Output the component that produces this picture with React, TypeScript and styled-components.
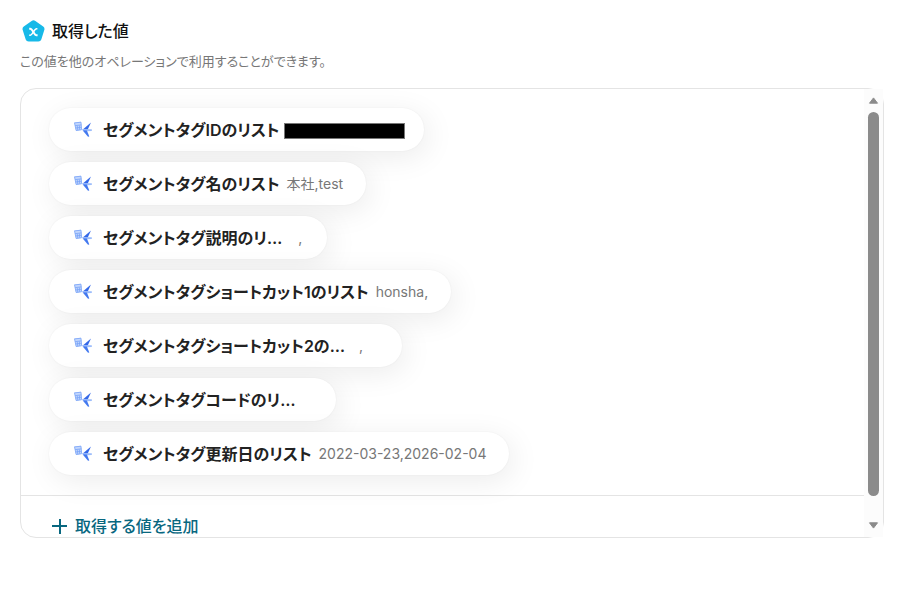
import React from "react";
import styled, { createGlobalStyle } from "styled-components";

const GlobalStyle = createGlobalStyle`
  * { box-sizing: border-box; }
  body {
    margin: 0;
    background: #fff;
    color: #222;
    font-family: Inter, "Noto Sans CJK JP", sans-serif;
    font-feature-settings: "palt";
  }
`;

const Page = styled.main`
  display: flex;
  flex-direction: column;
  height: 100vh;
  padding: 20px 21px 54px 20px;
`;

const Heading = styled.header`
  display: flex;
  align-items: center;
  gap: 7px;
  padding-left: 2px;
`;

const Title = styled.h1`
  margin: 0;
  color: #111;
  font-size: 16px;
  line-height: 22px;
  font-weight: 500;
`;

const Description = styled.p`
  margin: 9px 0 17px;
  color: #777;
  font-size: 13px;
  line-height: 20px;
`;

const Panel = styled.section`
  display: flex;
  flex: 1;
  min-height: 0;
  border: 1px solid #e4e4e4;
  border-radius: 16px;
`;

const Content = styled.div`
  flex: 1;
  min-width: 0;
  overflow: hidden;
  border-radius: 16px 0 0 16px;
`;

const List = styled.ul`
  display: flex;
  flex-direction: column;
  align-items: flex-start;
  gap: 11px;
  margin: 0;
  padding: 19px 28px 20px;
  list-style: none;
`;

const Pill = styled.li`
  display: flex;
  align-items: center;
  height: 43px;
  padding: 0 23px 0 25px;
  border-radius: 22px;
  background: #fff;
  box-shadow: 4px 6px 30px rgba(0, 0, 0, 0.08), 0 0 2px rgba(0, 0, 0, 0.06);
  white-space: nowrap;
`;

const Label = styled.span`
  margin-left: 11px;
  font-size: 16px;
  line-height: 24px;
  font-weight: 600;
`;

const Value = styled.span<{ $lead?: number; $width?: number }>`
  min-width: ${(p) => (p.$width ? `${p.$width}px` : "0")};
  margin-left: ${(p) => p.$lead ?? 7}px;
  color: #777;
  font-size: 14px;
  line-height: 20px;
`;

const Redaction = styled.span`
  width: 121px;
  height: 16px;
  margin: 2px -4px 0 4px;
  border: 1px solid #777;
  background: #000;
`;

const Footer = styled.footer`
  border-top: 1px solid #e4e4e4;
  padding: 18px 30px;
`;

const AddButton = styled.button`
  display: flex;
  align-items: center;
  gap: 6px;
  padding: 0;
  border: 0;
  background: none;
  color: #08677f;
  font: inherit;
  font-feature-settings: "palt";
  font-size: 16px;
  line-height: 24px;
  font-weight: 500;
  white-space: nowrap;
  cursor: pointer;
`;

const ScrollTrack = styled.div`
  display: flex;
  flex-direction: column;
  align-items: center;
  width: 19px;
  padding: 8px 0;
  background: #fcfcfc;
`;

const ScrollThumb = styled.div`
  flex: 1;
  width: 11px;
  margin: 8px 0 26px;
  border-radius: 6px;
  background: #8b8b8b;
`;

function AppIcon() {
  return (
    <svg width="23" height="22" viewBox="0 0 23 22" aria-hidden="true">
      <path
        d="M9.6.9a3.2 3.2 0 0 1 3.8 0l7.8 5.7a3 3 0 0 1 1.1 3.4l-3 9.4a3.1 3.1 0 0 1-2.9 2.1H6.6a3.1 3.1 0 0 1-2.9-2.1L.7 10a3 3 0 0 1 1.1-3.4Z"
        fill="#17b9e8"
      />
      <path
        d="M7.2 8.8h1c2.5 0 4 6.4 6.2 6.4h1.2"
        fill="none"
        stroke="#fff"
        strokeWidth="2"
      />
      <path
        d="M15.4 8.8h-.8c-2.5 0-4.1 6.4-6.4 6.4h-1"
        fill="none"
        stroke="#fff"
        strokeWidth="1.5"
      />
    </svg>
  );
}

function TagIcon() {
  return (
    <svg width="18" height="18" viewBox="0 0 18 18" aria-hidden="true">
      <path d="M.3 1.4 7 .8l.7 8.2-5.7 1Z" fill="#c3d7fd" />
      <path
        d="M.5 1.9 7 1.2M1.2 4.6l6.2-.7M3.2 4.6l.6 4.6M5.3 4.4l.4 4.4M1.7 7l5.8-.8M2.1 9.5 7.6 8.7M.5 1.8l1.6 7.6M7 1.2l.6 7.4"
        fill="none"
        stroke="#78a3f7"
        strokeWidth=".8"
      />
      <path d="M8.5 8.7 17 1.6 13.6 8.8l-3 .6Z" fill="#3468e8" />
      <path d="m7 8 10.8.3v1.6l-5.2.3Z" fill="#9dbdfb" />
      <path d="m8.5 9.2 4.4.3 2.4 6-1.3.2Z" fill="#4379ef" />
    </svg>
  );
}

type Item = {
  label: string;
  value?: string;
  redacted?: boolean;
  lead?: number;
  width?: number;
};

const items: Item[] = [
  { label: "セグメントタグIDのリスト", redacted: true },
  { label: "セグメントタグ名のリスト", value: "本社,test" },
  { label: "セグメントタグ説明のリ…", value: ",", lead: 16, width: 6 },
  { label: "セグメントタグショートカット1のリスト", value: "honsha," },
  { label: "セグメントタグショートカット2の…", value: ",", lead: 14, width: 20 },
  { label: "セグメントタグコードのリ…", value: "", width: 10 },
  { label: "セグメントタグ更新日のリスト", value: "2022-03-23,2026-02-04" },
];

export default function App() {
  return (
    <>
      <GlobalStyle />
      <Page>
        <Heading>
          <AppIcon />
          <Title>取得した値</Title>
        </Heading>
        <Description>この値を他のオペレーションで利用することができます。</Description>
        <Panel>
          <Content>
            <List>
              {items.map((item) => (
                <Pill key={item.label}>
                  <TagIcon />
                  <Label>{item.label}</Label>
                  {item.redacted ? (
                    <Redaction />
                  ) : (
                    <Value $lead={item.lead} $width={item.width}>
                      {item.value}
                    </Value>
                  )}
                </Pill>
              ))}
            </List>
            <Footer>
              <AddButton type="button">
                <svg width="18" height="18" viewBox="0 0 18 18" aria-hidden="true">
                  <path d="M9 2v15M1 9h15" stroke="currentColor" strokeWidth="2" />
                </svg>
                取得する値を追加
              </AddButton>
            </Footer>
          </Content>
          <ScrollTrack aria-hidden="true">
            <svg width="11" height="7" viewBox="0 0 11 7">
              <path d="M5.5.9 9.5 6.2h-8Z" fill="#8b8b8b" stroke="#8b8b8b" strokeLinejoin="round" />
            </svg>
            <ScrollThumb />
            <svg width="11" height="7" viewBox="0 0 11 7">
              <path d="M5.5 6.1 9.5.8h-8Z" fill="#8b8b8b" stroke="#8b8b8b" strokeLinejoin="round" />
            </svg>
          </ScrollTrack>
        </Panel>
      </Page>
    </>
  );
}
